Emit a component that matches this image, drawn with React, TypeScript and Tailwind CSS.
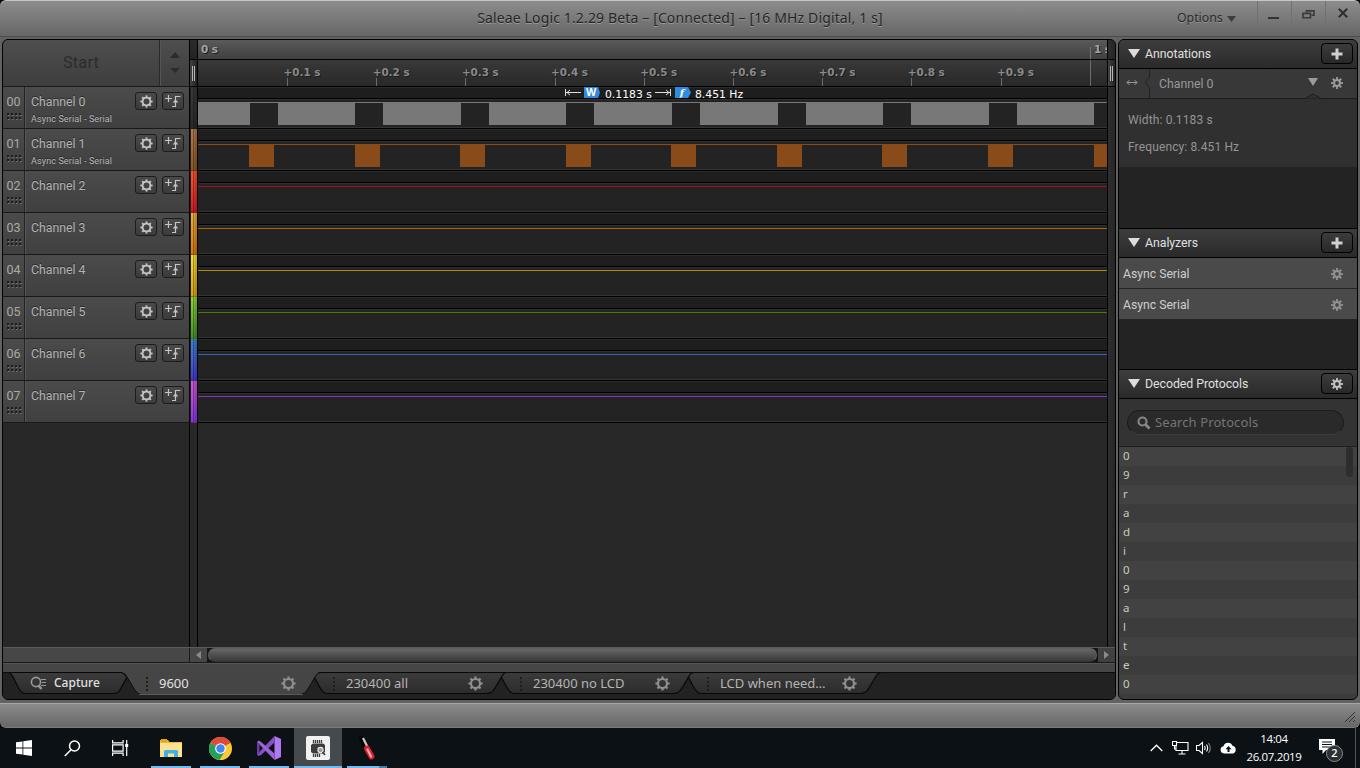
import type { ReactNode } from 'react';

type Channel = {
  id: string;
  name: string;
  analyzer?: string;
  line: string;
  strip: string;
};

const channels: Channel[] = [
  { id: '00', name: 'Channel 0', analyzer: 'Async Serial - Serial', line: '#787878', strip: 'from-[#3a3a3a] to-[#2a2a2a]' },
  { id: '01', name: 'Channel 1', analyzer: 'Async Serial - Serial', line: '#8a4b1b', strip: 'from-[#b5794c] to-[#8a5a20]' },
  { id: '02', name: 'Channel 2', line: '#9c1227', strip: 'from-[#fb5528] to-[#d8142a]' },
  { id: '03', name: 'Channel 3', line: '#b06200', strip: 'from-[#efb03a] to-[#d9760c]' },
  { id: '04', name: 'Channel 4', line: '#b08a00', strip: 'from-[#f5e23a] to-[#d9a30c]' },
  { id: '05', name: 'Channel 5', line: '#487c00', strip: 'from-[#92d63a] to-[#3f9422]' },
  { id: '06', name: 'Channel 6', line: '#2f66bb', strip: 'from-[#3688d4] to-[#4a32d2]' },
  { id: '07', name: 'Channel 7', line: '#8a2fc0', strip: 'from-[#d556d6] to-[#8a33e6]' },
];

const ticks = ['+0.1 s', '+0.2 s', '+0.3 s', '+0.4 s', '+0.5 s', '+0.6 s', '+0.7 s', '+0.8 s', '+0.9 s'];
const gaps = [52, 157, 263, 368, 474, 580, 685, 791, 896];
const bursts = [51, 157, 262, 368, 473, 579, 684, 790, 896];
const decoded = ['0', '9', 'r', 'a', 'd', 'i', '0', '9', 'a', 'l', 't', 'e', '0'];

const teeth = [0, 45, 90, 135, 180, 225, 270, 315];

function Gear({ size = 14, color = '#c4c4c4', ring = 2 }: { size?: number; color?: string; ring?: number }) {
  return (
    <svg width={size} height={size} viewBox="0 0 14 14" className="shrink-0">
      <circle cx="7" cy="7" r="4.2" fill="none" stroke={color} strokeWidth={ring} />
      {teeth.map((a) => (
        <rect key={a} x="6" y="0.4" width="2" height="2.4" fill={color} transform={`rotate(${a} 7 7)`} />
      ))}
    </svg>
  );
}

function MiniGear({ color }: { color: string }) {
  return (
    <svg width="12" height="12" viewBox="0 0 12 12" className="shrink-0">
      <circle cx="6" cy="6" r="2.9" fill="none" stroke={color} strokeWidth="2" />
      {teeth.map((a) => (
        <rect key={a} x="5.1" y="0" width="1.8" height="2.6" fill={color} transform={`rotate(${a} 6 6)`} />
      ))}
    </svg>
  );
}

function SmallButton({ children }: { children: ReactNode }) {
  return (
    <div className="flex h-[18px] w-[22px] items-center justify-center rounded-[3px] border border-[#1c1c1c] bg-linear-to-b from-[#4a4a4a] to-[#3b3b3b]">
      {children}
    </div>
  );
}

function TitleBar() {
  return (
    <div className="relative flex h-[37px] shrink-0 rounded-t-md border-t border-[#c4c6c4] border-b border-b-[#4c4c4c] bg-linear-to-b from-[#8d8d8d] to-[#666]">
      <div className="flex-1 pt-[7px] text-center font-['Noto_Sans','Open_Sans',sans-serif] text-[14px] leading-5 tracking-[0.14px] text-[#262626] [text-shadow:0_1px_0_#9a9a9a]">
        Saleae Logic 1.2.29 Beta – [Connected] – [16 MHz Digital, 1 s]
      </div>
      <div className="absolute top-0 right-0 flex">
        <div className="flex w-[80px] items-center gap-[4px] pt-[7px] font-['Noto_Sans','Open_Sans',sans-serif] text-[12.3px] leading-[18px] text-[#2b2b2b] [text-shadow:0_1px_0_#919191]">
          Options
          <svg width="9" height="6" viewBox="0 0 9 6" className="mt-0.5"><path d="M0 0h9L4.5 6z" fill="#3c3c3c" /></svg>
        </div>
        <div className="flex h-[26px] w-[34px] items-center justify-center border-l border-[#707070] pr-[3px]">
          <div className="mt-[7px] h-0.5 w-[11px] bg-[#333]" />
        </div>
        <div className="flex h-[26px] w-[34px] items-center justify-center border-l border-[#707070]">
          <svg width="13" height="9" viewBox="0 0 13 9" fill="none" stroke="#3a3a3a" strokeWidth="1.6" className="mr-px">
            <path d="M4.5 2.5v-1.6h7.5v4.4h-2.5" />
            <path d="M1 3.4h7.5v4.4H1z" />
          </svg>
        </div>
        <div className="flex h-[26px] w-[35px] justify-center border-l border-[#707070] pt-[7px] pr-px">
          <svg width="10" height="10" viewBox="0 0 10 10" stroke="#2e2e2e" strokeWidth="2"><path d="M.8.8l8.4 8.4M9.2.8L.8 9.2" /></svg>
        </div>
      </div>
    </div>
  );
}

function ChannelRow({ channel }: { channel: Channel }) {
  return (
    <div className="flex h-[42px] border-b border-[#191919] bg-linear-to-b from-[#4b4b4b] to-[#404040] font-[Roboto,sans-serif] text-[#a9a9a9]">
      <div className="flex w-[22px] flex-col items-center border-r border-[#232323] pt-[7px]">
        <span className="text-[12.5px] leading-4">{channel.id}</span>
        <svg width="16" height="9" viewBox="0 0 16 9" className="mt-[2px]">
          {[0, 4, 8, 12].map((x) => (
            <g key={x}>
              <rect x={x + 1} y="1" width="2" height="2" fill="#1d1d1d" />
              <rect x={x + 1} y="5" width="2" height="2" fill="#1d1d1d" />
              <rect x={x + 2} y="3" width="1.5" height="1" fill="#777" />
              <rect x={x + 2} y="7" width="1.5" height="1" fill="#777" />
            </g>
          ))}
        </svg>
      </div>
      <div className="flex-1 border-l border-[#565656] pt-[7px] pl-[5px] [text-shadow:0_-1px_0_#2a2a2a]">
        <div className="text-[12.3px] leading-4 text-[#b4b4b4]">{channel.name}</div>
        {channel.analyzer && <div className="mt-[3px] text-[9px] leading-[12px] tracking-[0.12px] text-[#b8b8b8]">{channel.analyzer}</div>}
      </div>
      <div className="flex gap-[5px] pt-[5px] pr-[5px]">
        <SmallButton><Gear size={13} /></SmallButton>
        <SmallButton>
          <svg width="16" height="14" viewBox="0 0 16 14" fill="none" stroke="#c4c4c4" strokeWidth="1.2">
            <path d="M0 4.500h7M3.500 1v7" />
            <path d="M7 12.500h3.500V2.500h5" />
            <path d="M7.700 8.500L10.500 5.200l2.800 3.300z" fill="#c4c4c4" stroke="none" />
          </svg>
        </SmallButton>
      </div>
    </div>
  );
}

function Sidebar() {
  return (
    <div className="w-[187px] shrink-0 border-r border-black">
      <div className="flex h-[47px] rounded-tl border-b border-[#191919] bg-linear-to-b from-[#4e4e4e] to-[#3e3e3e]">
        <div className="flex w-[157px] items-center justify-center border-r border-[#2a2a2a] pt-px font-[Roboto,sans-serif] text-[16.5px] tracking-[0.1px] text-[#2c2c2c]">
          Start
        </div>
        <div className="flex flex-1 flex-col items-center gap-[10px] border-l border-[#555] pt-[12px]">
          <svg width="10" height="6" viewBox="0 0 10 6"><path d="M5 0l5 6H0z" fill="#2c2c2c" /></svg>
          <svg width="10" height="5" viewBox="0 0 10 5"><path d="M0 0h10L5 5z" fill="#2c2c2c" /></svg>
        </div>
      </div>
      {channels.map((c) => <ChannelRow key={c.id} channel={c} />)}
    </div>
  );
}

function Grip() {
  return (
    <div className="flex h-[27px] items-center justify-center gap-px border-b border-black bg-linear-to-r from-[#444] to-[#222]">
      <div className="h-[15px] w-px bg-[#b5b5b5]" />
      <div className="h-[15px] w-px bg-[#b5b5b5]" />
    </div>
  );
}

function Ruler() {
  return (
    <div className="font-['DejaVu_Sans',sans-serif] text-[10.4px] font-bold text-[#8a8a8a] [text-shadow:1px_1px_0_#1c1c1c]">
      <div className="flex h-5 justify-between border-b border-black bg-linear-to-b from-[#5a5a5a] to-[#404040] leading-[19px] text-[#a5a5a5]">
        <span className="pl-[3px]">0 s</span>
        <div className="flex w-[17px] overflow-hidden pt-[7px]">
          <div className="w-px shrink-0 bg-[#757575]" />
          <span className="-mt-[7px] pl-[3px] whitespace-nowrap">1 s</span>
        </div>
      </div>
      <div className="flex h-[27px] overflow-hidden border-b border-black bg-linear-to-b from-[#393939] to-[#282828] pl-[85.5px]">
        {ticks.map((t) => (
          <div key={t} className="w-[89.2px] shrink-0">
            <div className="h-[18px] pt-[3px] leading-[18px]">{t}</div>
            <div className="ml-[3.5px] h-2 w-px bg-[#6b6b6b]" />
          </div>
        ))}
        <div className="ml-[3.5px] w-px shrink-0 bg-[#6b6b6b]" />
      </div>
    </div>
  );
}

function Measurement() {
  return (
    <div className="absolute top-0 left-[367px] flex h-[11px] font-['DejaVu_Sans',sans-serif] text-[10.8px] leading-[16px] text-white">
      <svg width="17" height="11" viewBox="0 0 17 11" fill="none" stroke="#ddd"><path d="M.5 2v7M1 5.500h15M5 3L2 5.500 5 8" /></svg>
      <div className="ml-[2px] h-[11px] w-[16px] bg-[#2f8be0] pr-[2px] text-center font-['Open_Sans',sans-serif] text-[10.5px] leading-[11px] font-bold [clip-path:polygon(0_0,14px_0,16px_50%,14px_100%,0_100%)]">W</div>
      <span className="ml-[5px] w-[48px] whitespace-nowrap">0.1183 s</span>
      <svg width="17" height="11" viewBox="0 0 17 11" fill="none" stroke="#ddd" className="ml-px"><path d="M16.500 2v7M1 5.500h15M12 3l3 2.500L12 8" /></svg>
      <div className="ml-[4px] h-[11px] w-[16px] bg-[#2f8be0] pr-[2px] text-center font-['DejaVu_Serif',serif] text-[10px] leading-[11px] font-bold italic [clip-path:polygon(0_0,13px_0,16px_50%,13px_100%,0_100%)]">f</div>
      <span className="ml-[4px] whitespace-nowrap">8.451 Hz</span>
    </div>
  );
}

function Track({ channel, index }: { channel: Channel; index: number }) {
  return (
    <div className="relative h-[42px] border-b border-black bg-[#232323]">
      <div className="h-[12px] border-t border-b border-t-[#2b2b2b] border-b-black bg-[#1e1e1e]" />
      <div className="h-px bg-[#303030]" />
      <svg width="909" height="26" viewBox="0 0 909 26" className="mt-[2px] block" shapeRendering="crispEdges">
        <rect width="909" height="1" fill={channel.line} />
        {index === 0 && (
          <>
            <rect width="909" height="23" fill="#787878" />
            {gaps.map((x) => <rect key={x} x={x} y="1" width="28" height="22" fill="#232323" />)}
          </>
        )}
        {index === 1 && bursts.map((x) => <rect key={x} x={x} y="1" width="25" height="22" fill="#8a4b1b" />)}
        <rect y="25" width="909" height="1" fill="#343434" />
      </svg>
      {index === 0 && <Measurement />}
    </div>
  );
}

function Timeline() {
  return (
    <>
      <div className="flex w-[8px] shrink-0 flex-col border-r border-black">
        <div className="h-5 border-b border-black bg-linear-to-b from-[#2c2c2c] to-[#222]" />
        <Grip />
        {channels.map((c) => (
          <div key={c.id} className="h-[42px] bg-[#222] pl-px">
            <div className={`flex h-full border-b border-black/50 bg-linear-to-b ${c.strip}`}>
              <div className="ml-[2px] w-px bg-black/35" />
              <div className="w-px bg-black/10" />
              <div className="w-[2px] bg-black/20" />
            </div>
          </div>
        ))}
      </div>
      <div className="w-[910px] shrink-0 border-r border-black">
        <Ruler />
        {channels.map((c, i) => <Track key={c.id} channel={c} index={i} />)}
      </div>
      <div className="w-[7px] shrink-0 rounded-tr bg-linear-to-r from-[#2e2e2e] to-[#262626]">
        <div className="h-5 border-b border-black" />
        <Grip />
      </div>
    </>
  );
}

function ScrollRow() {
  return (
    <div className="flex h-4 border-t border-b border-t-[#5a5a5a] border-b-[#1a1a1a]">
      <div className="w-[187px] border-r border-[#1c1c1c] bg-[#474747]" />
      <div className="flex w-[17px] items-center justify-center bg-[#474747]">
        <svg width="5" height="8" viewBox="0 0 5 8"><path d="M5 0v8L0 4z" fill="#8a8a8a" /></svg>
      </div>
      <div className="flex-1 bg-[#151515] px-px">
        <div className="h-[14px] rounded-full border border-[#5f5f5f] border-b-[#333] bg-linear-to-b from-[#666] to-[#3a3a3a]" />
      </div>
      <div className="flex w-[17px] items-center justify-center bg-[#404040]">
        <svg width="5" height="8" viewBox="0 0 5 8"><path d="M0 0v8l5-4z" fill="#8a8a8a" /></svg>
      </div>
    </div>
  );
}

function Tab({ label, active }: { label: string; active?: boolean }) {
  return (
    <div className={`flex w-[187px] items-center pl-[19px] ${active ? 'text-[#e2e2e2]' : 'text-[#b4b4b4]'}`}>
      <svg width="3" height="14" viewBox="0 0 3 14">
        {[0, 4, 8, 12].map((y) => <rect key={y} y={y} width="2" height="2" fill="#1e1e1e" />)}
      </svg>
      <span className="w-[132px] pl-[10px]">{label}</span>
      <Gear size={15} color="#8f8f8f" ring={2} />
    </div>
  );
}

function TabBar() {
  return (
    <div className="relative h-[35px] rounded-bl bg-[#222]">
      <svg width="1113" height="35" viewBox="3 664 1113 35" className="absolute top-0 left-0">
        <defs>
          <linearGradient id="tab" x1="0" y1="0" x2="0" y2="1">
            <stop offset="0" stopColor="#3b3b3b" />
            <stop offset="1" stopColor="#2c2c2c" />
          </linearGradient>
        </defs>
        <path d="M2 663H1116V672.500H2z" fill="#464646" />
        <path d="M2 672.500H1116" stroke="#0b0b0b" />
        <g fill="url(#tab)" stroke="#080808" strokeWidth="1.2">
          <path d="M686 672.500L693 686Q697 693.500 701 693.500H861Q866 693.500 869 688L876 676Q878 672.500 881 672.500z" />
          <path d="M499 672.500L506 686Q510 693.500 514 693.500H674Q679 693.500 682 688L689 676Q691 672.500 694 672.500z" />
          <path d="M312 672.500L319 686Q323 693.500 327 693.500H487Q492 693.500 495 688L502 676Q504 672.500 507 672.500z" />
          <path d="M8 672.500Q11 673 13 677L18 687Q21 693.500 25 693.500H113Q118 693.500 120 690L127 677L123 672.500z" />
        </g>
        <path d="M121 671.500Q125 673 127 677L133 687Q137 694.500 142 694.500H300Q305 694.500 308 689L315 677Q318 671.500 321 671.500z" fill="#454545" />
        <path d="M121 672.500Q125 673 127 677L133 687Q137 694.500 142 694.500H300Q305 694.500 308 689L315 677Q317 672.500 321 672.500" fill="none" stroke="#0b0b0b" />
        <path d="M139 694.500H303" stroke="#5a5a5a" />
      </svg>
      <div className="relative flex h-[31px] pt-[8px] font-['Noto_Sans','Open_Sans',sans-serif] text-[13px]">
        <div className="flex w-[124px] items-center pb-[2px] pl-[27px] text-[12px] font-medium text-[#e0e0e0]">
          <svg width="18" height="14" viewBox="0 0 18 14" fill="none" stroke="#999">
            <circle cx="6" cy="6" r="4.600" strokeWidth="1.600" />
            <path d="M8.500 9.500l3 3.500" strokeWidth="2.500" />
            <path d="M11 3.500h5M12 6.500h4M11 9.500h5" />
          </svg>
          <span className="pl-[6px]">Capture</span>
        </div>
        <Tab label="9600" active />
        <Tab label="230400 all" />
        <Tab label="230400 no LCD" />
        <Tab label="LCD when need…" />
      </div>
    </div>
  );
}

function PanelHeader({ title, icon }: { title: string; icon: ReactNode }) {
  return (
    <div className="flex h-[30px] items-center border-y border-black bg-linear-to-b from-[#3d3d3d] to-[#2a2a2a] pr-[4px] pl-[9px]">
      <svg width="12" height="9" viewBox="0 0 12 9" className="mb-px"><path d="M0 0h12L6 9z" fill="#dcdcdc" /></svg>
      <span className="flex-1 pt-px pl-[5px] text-[12.3px] tracking-[-0.04px] text-[#e0e0e0]">{title}</span>
      <div className="-mt-px flex h-[21px] w-[32px] items-center justify-center rounded border border-black bg-linear-to-b from-[#3c3c3c] to-[#282828]">
        {icon}
      </div>
    </div>
  );
}

const plus = <svg width="12" height="12" viewBox="0 0 12 12"><path d="M4.500 0.500h3v4h4v3h-4v4h-3v-4h-4v-3h4z" fill="#d0d0d0" /></svg>;

function RightPanel() {
  return (
    <div className="flex w-[240px] flex-col overflow-hidden rounded-md border border-black bg-[#232323] font-[Roboto,sans-serif]">
      <div className="-mt-px"><PanelHeader title="Annotations" icon={plus} /></div>
      <div className="relative flex h-[30px] items-center border-b border-[#1d1d1d] bg-[#383838]">
        <svg width="32" height="29" viewBox="0 0 32 29" fill="none">
          <path d="M8 13.500h10M10.500 11L8 13.500l2.500 2.500M15.500 11l2.500 2.500-2.500 2.500" stroke="#999" />
          <path d="M30.500 0v8L26.500 13.500l4 5.500v10" stroke="#232323" />
        </svg>
        <span className="flex-1 pt-px pl-[8px] text-[12.300px] text-[#989898]">Channel 0</span>
        <svg width="10" height="8" viewBox="0 0 10 8" className="mb-[3px]"><path d="M0 0h10L5 8z" fill="#9c9c9c" /></svg>
        <div className="pr-[14px] pb-px pl-[13px]"><MiniGear color="#9c9c9c" /></div>
        <svg width="16" height="6" viewBox="0 0 16 6" className="absolute right-[36px] -bottom-px"><path d="M0 5.500L8 1l8 4.500" fill="#303030" stroke="#1d1d1d" /></svg>
      </div>
      <div className="h-[68px] bg-[#303030] pt-[13px] pl-[9px] text-[12px] leading-4 tracking-[0.130px] text-[#949494]">
        <div>Width: 0.1183 s</div>
        <div className="mt-[11px]">Frequency: 8.451 Hz</div>
      </div>
      <div className="mt-[61px]"><PanelHeader title="Analyzers" icon={plus} /></div>
      {[0, 1].map((i) => (
        <div key={i} className="flex h-[31px] items-center justify-between border-b border-[#232323] bg-[#4a4a4a] pt-px pr-[14px] pl-[4px] text-[12.200px] text-[#cfcfcf]">
          <span className="pt-[2px]">Async Serial</span>
          <MiniGear color="#929292" />
        </div>
      ))}
      <div className="mt-[49px]"><PanelHeader title="Decoded Protocols" icon={<MiniGear color="#c4c4c4" />} /></div>
      <div className="h-[48px] border-b border-[#1c1c1c] bg-[#333] px-[8px] pt-[11px]">
        <div className="flex h-[25px] w-[217px] items-center rounded-full border border-[#1d1d1d] border-b-[#3e3e3e] bg-[#2a2a2a] pl-[9px] font-['Noto_Sans','Open_Sans',sans-serif] text-[13px] tracking-[0.1px] text-[#757575]">
          <svg width="14" height="14" viewBox="0 0 14 14" fill="none" stroke="#858585" strokeWidth="2.200">
            <circle cx="5.500" cy="5.500" r="4" />
            <path d="M8.500 8.500l4 4" strokeWidth="2.800" />
          </svg>
          <span className="pt-px pl-[4px]">Search Protocols</span>
        </div>
      </div>
      <div className="relative flex-1 bg-[#3c3c3c]">
        {decoded.map((d, i) => (
          <div key={i} className="h-[19px] pl-[4px] font-['Noto_Sans',sans-serif] text-[11.500px] leading-[17px] text-[#c3cdbb] odd:bg-[#424242]">{d}</div>
        ))}
        <div className="absolute top-0 right-[4px] h-[30px] w-[7px] rounded bg-[#2d2d2d]" />
      </div>
    </div>
  );
}

function TaskItem({ children, line, active }: { children: ReactNode; line?: boolean; active?: boolean }) {
  return (
    <div className={`flex h-10 w-12 flex-col items-center ${active ? 'bg-[#444a4d]' : ''}`}>
      <div className="flex h-[38px] items-center pt-0.5">{children}</div>
      {line && <div className={`h-0.5 bg-[#76b9ed] ${active ? 'w-12' : 'w-10'}`} />}
    </div>
  );
}

function Taskbar() {
  return (
    <div className="flex h-10 shrink-0 bg-[#0c1115]">
      <TaskItem>
        <svg width="16" height="16" viewBox="0 0 16 16" fill="#fff"><path d="M0 2.300L6.500 1.400v6.200H0zM7.300 1.300L16 0v7.600H7.300zM0 8.400h6.500v6.200L0 13.700zM7.300 8.400H16V16l-8.700-1.300z" /></svg>
      </TaskItem>
      <TaskItem>
        <svg width="17" height="17" viewBox="0 0 17 17" fill="none" stroke="#fff" strokeWidth="1.500"><circle cx="10.500" cy="6" r="5" /><path d="M7 9.800L.8 16" /></svg>
      </TaskItem>
      <TaskItem>
        <svg width="17" height="16" viewBox="0 0 17 16" fill="none" stroke="#fff" strokeWidth="1.200"><path d="M.6 0v2.800h10.500V0M.6 16v-2.800h10.500V16M.6 4.800h10.500v6.400H.6zM14.700 0v16" /><path d="M13.200 4h3v3h-3z" fill="#fff" stroke="none" /></svg>
      </TaskItem>
      <div className="flex gap-px pl-[3px]">
        <TaskItem line>
          <svg width="22" height="19" viewBox="0 0 22 19">
            <path d="M0 1h8l1.500 2H22v15H0z" fill="#f0b93a" />
            <path d="M1 0h6v3H1z" fill="#e8a317" />
            <path d="M0 4h22v14H0z" fill="#fde38f" />
            <path d="M4 18v-5.500Q4 11 5.500 11h11Q18 11 18 12.500V18h-4v-3.500H8V18z" fill="#3fb1e6" />
          </svg>
        </TaskItem>
        <TaskItem line>
          <svg width="23" height="23" viewBox="0 0 24 24">
            <circle cx="12" cy="12" r="12" fill="#fbc934" />
            <path d="M12 12L1.600 6A12 12 0 0 1 22.400 6z" fill="#de4b3b" />
            <path d="M12 0A12 12 0 0 1 22.400 6.500H12z" fill="#de4b3b" />
            <path d="M1.600 6A12 12 0 0 0 11 24l5.500-9L12 12z" fill="#25a05a" />
            <circle cx="12" cy="12" r="5.600" fill="#fff" />
            <circle cx="12" cy="12" r="4.400" fill="#4285f4" />
          </svg>
        </TaskItem>
        <TaskItem line>
          <svg width="24" height="24" viewBox="0 0 24 24">
            <path d="M17.500 0L24 3v18l-6.500 3z" fill="#b179f1" />
            <path d="M17.500 0v6.500L4 19 1.500 20 0 18.500z" fill="#8650c7" />
            <path d="M17.500 24v-6.500L3.500 5.500 1.500 4.500 0 6z" fill="#9a63d8" />
            <path d="M0 6v12.500l2.500-1V8z" fill="#6b3ba8" />
          </svg>
        </TaskItem>
      </div>
      <div className="flex pl-px">
        <TaskItem line active>
          <svg width="24" height="24" viewBox="0 0 24 24">
            <rect width="24" height="24" rx="2" fill="#f1f1f1" />
            <path d="M5 9l2-1.500h10L19 9v7l-2 1.500H7L5 16z" fill="#3b3b3b" />
            <path d="M7.500 4v3M9.500 4v3M11.500 4v3M13.500 4v3M15.500 4v3M7.500 18v3M9.500 18v3M11.500 18v3M13.500 18v3" stroke="#3b3b3b" strokeWidth="1.300" />
            <circle cx="14.500" cy="14" r="2.600" fill="#999" stroke="#eee" strokeWidth="1.100" />
            <path d="M16.500 16l2.500 3" stroke="#3b3b3b" strokeWidth="1.600" />
          </svg>
        </TaskItem>
        <div className="flex h-10 flex-col items-center pl-[5px]">
          <div className="flex h-[38px] items-center pt-0.5">
            <svg width="18" height="24" viewBox="0 0 18 24">
              <path d="M3.500 2.500l4.500 10" stroke="#000" strokeWidth="4.500" strokeLinecap="round" />
              <path d="M5 2l5 10" stroke="#c9c9c9" strokeWidth="2.200" />
              <path d="M9 12.500l4.500 8" stroke="#e32036" strokeWidth="5.800" strokeLinecap="round" />
              <path d="M9.500 13.500l3.500 7" stroke="#ffb0b6" strokeWidth="2" strokeLinecap="round" />
            </svg>
          </div>
          <div className="flex"><div className="h-0.5 w-8 bg-[#76b9ed]" /><div className="h-0.5 w-2 bg-[#4c7ca2]" /></div>
        </div>
      </div>
      <div className="ml-auto flex items-center text-white">
        <svg width="13" height="8" viewBox="0 0 13 8" fill="none" stroke="#fff" strokeWidth="1.300" className="mr-[9px]"><path d="M.7 7l5.800-5.800L12.300 7" /></svg>
        <svg width="17" height="14" viewBox="0 0 17 14" fill="none" stroke="#fff" strokeWidth="1.100" className="mr-[7px]"><path d="M5 1.500h11v8H4V5M10 9.500v3M6.500 13h7M.5.500h4v4h-4zM2.500 4.500V8H4" /></svg>
        <svg width="17" height="14" viewBox="0 0 17 14" fill="none" stroke="#fff" strokeWidth="1.100" className="mr-[7px]"><path d="M.5 4.500h2.500L6.500 1.500v11L3 9.500H.5zM8.500 5q1.300 2 0 4M10.500 3.500q2.300 3.500 0 7" /><path d="M12.500 2q3.500 5 0 10" stroke="#888" /></svg>
        <svg width="17" height="12" viewBox="0 0 17 12" className="mr-[9px]"><path d="M4 11.500A3.700 3.700 0 0 1 3.500 4.200 4.700 4.700 0 0 1 12.500 3.800 4 4 0 0 1 13 11.500z" fill="#fff" /><path d="M8.500 4l3 3.200H9.500V10h-2V7.200h-2z" fill="#0c1115" /></svg>
        <div className="w-[56px] pb-px text-center font-['Open_Sans',sans-serif] text-[11.500px] leading-[18px] tracking-[-0.350px] whitespace-nowrap">
          <div>14:04</div>
          <div>26.07.2019</div>
        </div>
        <div className="relative ml-[17px] h-[26px] w-[36px]">
          <svg width="17" height="17" viewBox="0 0 17 17" className="mt-[3px]"><path d="M0 1h16v11H7l-3.500 4v-4H0z" fill="#fff" /><path d="M3 4h10M3 6.500h10M3 9h8" stroke="#0c1115" /></svg>
          <div className="absolute top-[10px] left-[7px] flex size-[17px] items-center justify-center rounded-full border border-[#888] bg-[#2c3033] font-['Open_Sans',sans-serif] text-[11px] font-semibold">2</div>
        </div>
        <div className="h-10 w-[5px] border-l border-[#555]" />
      </div>
    </div>
  );
}

export default function App() {
  return (
    <div className="flex h-[768px] w-[1360px] flex-col overflow-hidden bg-black">
      <TitleBar />
      <div className="flex h-[666px] shrink-0 gap-[2px] bg-[#626262] px-[2px] pt-[2px] pb-[3px]">
        <div className="flex w-[1114px] flex-col overflow-hidden rounded-md border border-black bg-[#282828]">
          <div className="flex h-[607px] shrink-0">
            <Sidebar />
            <Timeline />
          </div>
          <ScrollRow />
          <div className="border-t border-[#555]"><TabBar /></div>
        </div>
        <RightPanel />
      </div>
      <div className="flex h-[25px] shrink-0 items-end justify-end rounded-b-md border-t border-b border-t-[#a8a8a8] border-b-[#7c7c7c] bg-linear-to-b from-[#8b8b8b] to-[#686868]">
        <svg width="12" height="12" viewBox="0 0 12 12" stroke="#333" className="mr-[4px] mb-[4px]"><path d="M1 11L11 1M5 11l6-6M9 11l2-2" /></svg>
      </div>
      <Taskbar />
    </div>
  );
}
